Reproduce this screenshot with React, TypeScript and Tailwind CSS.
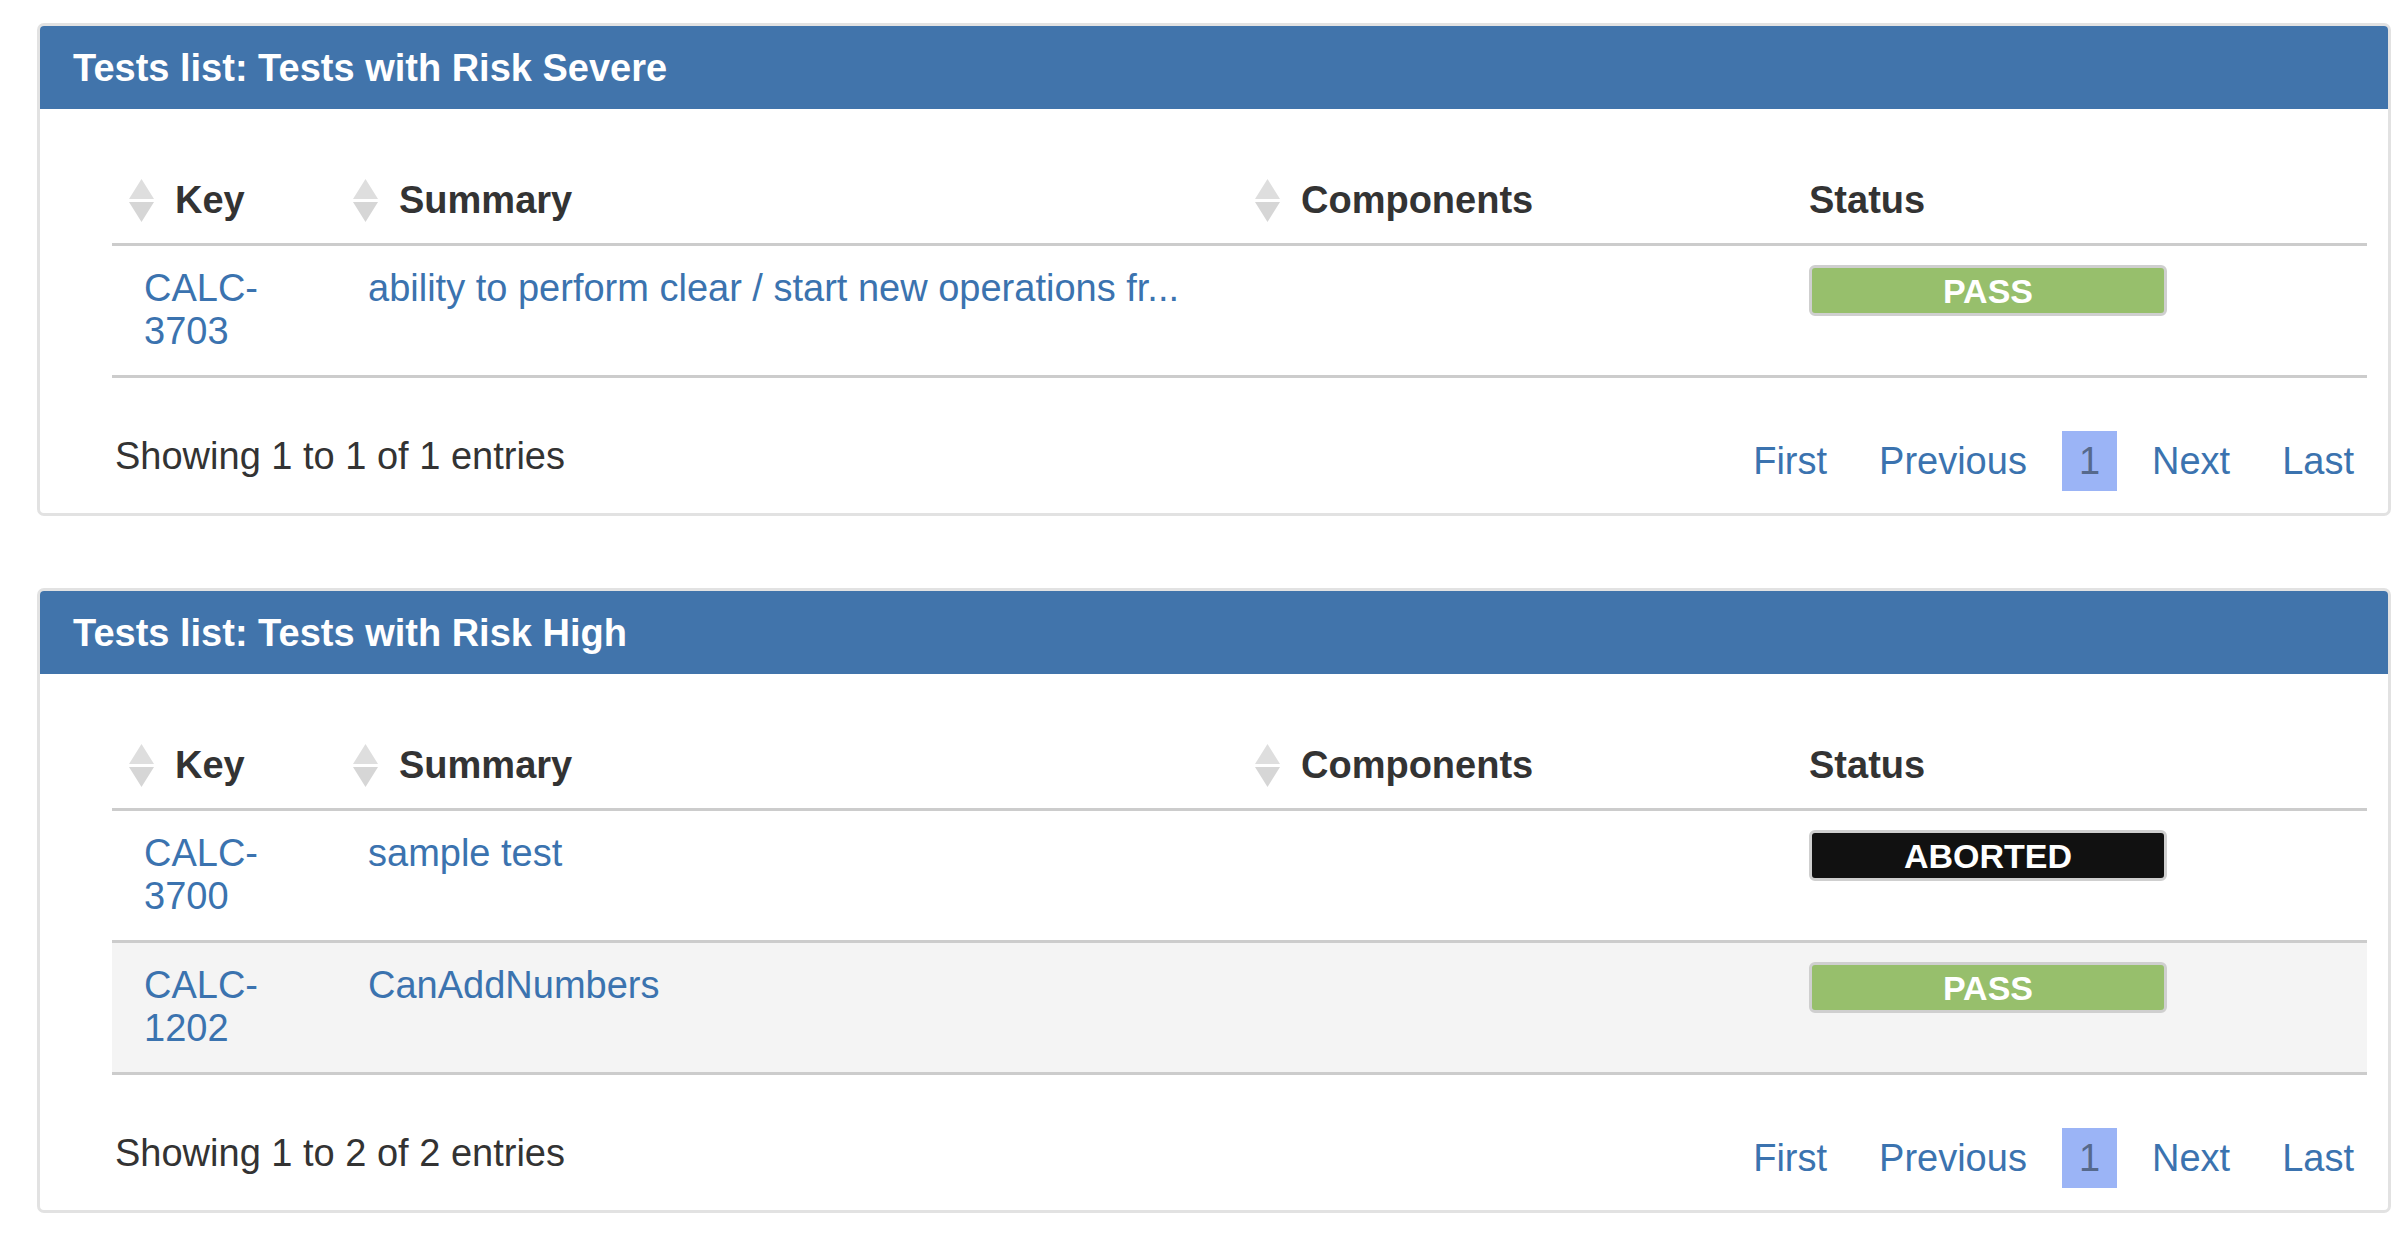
import React from "react";

type Row = {
  key: string;
  summary: string;
  components: string;
  status: "PASS" | "ABORTED";
};

type Panel = {
  title: string;
  rows: Row[];
};

const PANELS: Panel[] = [
  {
    title: "Tests list: Tests with Risk Severe",
    rows: [
      {
        key: "CALC-3703",
        summary: "ability to perform clear / start new operations fr...",
        components: "",
        status: "PASS",
      },
    ],
  },
  {
    title: "Tests list: Tests with Risk High",
    rows: [
      { key: "CALC-3700", summary: "sample test", components: "", status: "ABORTED" },
      { key: "CALC-1202", summary: "CanAddNumbers", components: "", status: "PASS" },
    ],
  },
];

// Both-ways sort arrows in the column headers
const SortIcon = () => (
  <svg width="27" height="45" viewBox="0 0 27 45" className="shrink-0">
    <polygon points="13.5,1 26,21 1,21" fill="#dedede" />
    <polygon points="1,24 26,24 13.5,44" fill="#d6d6d6" />
  </svg>
);

const StatusBadge = ({ status }: { status: Row["status"] }) => (
  <div
    className={
      status === "PASS"
        ? "w-[358px] h-[51px] flex items-center justify-center rounded-[6px] border-[3px] border-[#cfcfcf] bg-[#97bf6c] text-white font-bold text-[34px] leading-none"
        : "w-[358px] h-[51px] flex items-center justify-center rounded-[6px] border-[3px] border-[#cfcfcf] bg-[#111111] text-white font-bold text-[34px] leading-none"
    }
  >
    {status}
  </div>
);

const SortableHeader = ({ label }: { label: string }) => (
  <th className="pl-[16px] py-[20px] text-left align-middle font-bold">
    <div className="flex items-center gap-[20px]">
      <SortIcon />
      <span>{label}</span>
    </div>
  </th>
);

const TestsPanel = ({ panel }: { panel: Panel }) => (
  <div className="w-[2354px] border-[3px] border-[#e2e2e2] rounded-[7px] bg-white overflow-hidden">
    {/* Title bar */}
    <div className="h-[83px] bg-[#4174ab] flex items-center pl-[33px]">
      <h2 className="text-white font-bold text-[38px] leading-none">{panel.title}</h2>
    </div>

    {/* Table */}
    <div className="pt-[49px] pl-[72px] pr-[21px]">
      <table className="table-fixed w-[2255px] text-[38px] leading-[43px] text-[#333333]">
        <colgroup>
          <col className="w-[224px]" />
          <col className="w-[902px]" />
          <col className="w-[539px]" />
          <col className="w-[590px]" />
        </colgroup>
        <thead>
          <tr className="border-b-[3px] border-[#cccccc]">
            <SortableHeader label="Key" />
            <SortableHeader label="Summary" />
            <SortableHeader label="Components" />
            <th className="pl-[32px] py-[21px] text-left align-middle font-bold">Status</th>
          </tr>
        </thead>
        <tbody>
          {panel.rows.map((row, i) => (
            <tr
              key={row.key}
              className={
                i % 2 === 1
                  ? "bg-[#f4f4f4] border-b-[3px] border-[#cccccc]"
                  : "bg-white border-b-[3px] border-[#cccccc]"
              }
            >
              <td className="pl-[32px] pr-[20px] pt-[21px] pb-[22px] align-top text-[#3b73af]">{row.key}</td>
              <td className="pl-[32px] pr-[20px] pt-[21px] pb-[22px] align-top text-[#3b73af]">{row.summary}</td>
              <td className="pl-[32px] pr-[20px] pt-[21px] pb-[22px] align-top">{row.components}</td>
              <td className="pl-[32px] py-[19px] align-top">
                <StatusBadge status={row.status} />
              </td>
            </tr>
          ))}
        </tbody>
      </table>
    </div>

    {/* Footer: info + pagination */}
    <div className="flex items-start justify-between pl-[75px] pr-[17px] pt-[53px] pb-[22px] text-[38px] leading-[43px]">
      <div className="pt-[4px] text-[#333333]">
        Showing 1 to {panel.rows.length} of {panel.rows.length} entries
      </div>
      <div className="flex items-center gap-[18px] text-[#3b73af]">
        <span className="h-[60px] px-[17px] flex items-center">First</span>
        <span className="h-[60px] px-[17px] flex items-center">Previous</span>
        <span className="h-[60px] px-[17px] flex items-center bg-[#9bb4f6] text-[#56698c]">1</span>
        <span className="h-[60px] px-[17px] flex items-center">Next</span>
        <span className="h-[60px] px-[17px] flex items-center">Last</span>
      </div>
    </div>
  </div>
);

export default function App() {
  return (
    <div
      className="min-h-screen bg-white pt-[23px] pl-[37px] flex flex-col gap-[72px]"
      style={{ fontFamily: '"Liberation Sans", Arial, Helvetica, sans-serif' }}
    >
      {PANELS.map((p) => (
        <TestsPanel key={p.title} panel={p} />
      ))}
    </div>
  );
}
